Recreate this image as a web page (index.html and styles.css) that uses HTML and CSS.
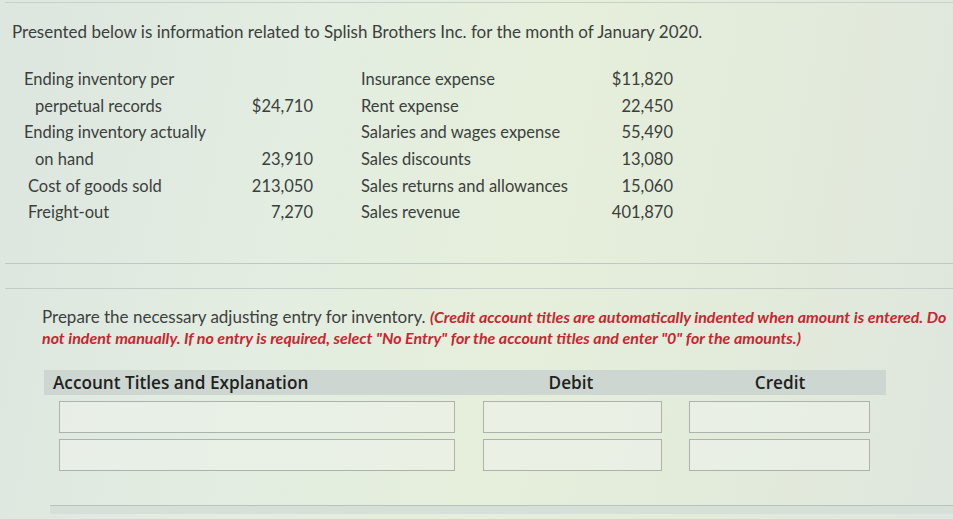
FILE: index.html
```html
<!DOCTYPE html>
<html>
<head>
<meta charset="utf-8">
<link rel="stylesheet" href="styles.css">
</head>
<body>
<div class="page">
  <section class="panel top">
    <p class="intro">Presented below is information related to Splish Brothers Inc. for the month of January 2020.</p>
    <div class="data">
      <div class="col col1">
        <div class="row"><span class="lbl">Ending inventory per</span><span class="val"></span></div>
        <div class="row"><span class="lbl ind">perpetual records</span><span class="val">$24,710</span></div>
        <div class="row"><span class="lbl">Ending inventory actually</span><span class="val"></span></div>
        <div class="row"><span class="lbl ind">on hand</span><span class="val">23,910</span></div>
        <div class="row"><span class="lbl sm">Cost of goods sold</span><span class="val">213,050</span></div>
        <div class="row"><span class="lbl sm">Freight-out</span><span class="val">7,270</span></div>
      </div>
      <div class="col col2">
        <div class="row"><span class="lbl">Insurance expense</span><span class="val">$11,820</span></div>
        <div class="row"><span class="lbl">Rent expense</span><span class="val">22,450</span></div>
        <div class="row"><span class="lbl">Salaries and wages expense</span><span class="val">55,490</span></div>
        <div class="row"><span class="lbl">Sales discounts</span><span class="val">13,080</span></div>
        <div class="row"><span class="lbl">Sales returns and allowances</span><span class="val">15,060</span></div>
        <div class="row"><span class="lbl">Sales revenue</span><span class="val">401,870</span></div>
      </div>
    </div>
  </section>
  <section class="panel bottom">
    <p class="instr"><span class="plain">Prepare the necessary adjusting entry for inventory.</span> <em class="warn">(Credit account titles are automatically indented when amount is entered. Do not indent manually. If no entry is required, select "No Entry" for the account titles and enter "0" for the amounts.)</em></p>
    <div class="journal">
      <div class="jhead">
        <span class="h-acct">Account Titles and Explanation</span>
        <span class="h-debit">Debit</span>
        <span class="h-credit">Credit</span>
      </div>
      <div class="jrow">
        <div class="box acct"></div>
        <div class="box debit"></div>
        <div class="box credit"></div>
      </div>
      <div class="jrow">
        <div class="box acct"></div>
        <div class="box debit"></div>
        <div class="box credit"></div>
      </div>
    </div>
    <div class="footline"></div>
  </section>
</div>
</body>
</html>
```

FILE: styles.css
```css
html, body {
  margin: 0;
  padding: 0;
}
body {
  width: 953px;
  height: 519px;
  overflow: hidden;
  background: linear-gradient(100deg, #dde6df 0%, #e3ede1 30%, #e6efdb 55%, #e2eadb 80%, #dfe6de 100%);
  font-family: Lato, "Open Sans", sans-serif;
  color: #3a3f3c;
}
.page {
  display: flex;
  flex-direction: column;
}
.panel.top {
  border-top: 1px solid #c8d0ca;
  border-bottom: 1px solid #bfc8c2;
  margin: 2px 0 0 5px;
  height: 262px;
  box-sizing: border-box;
}
.intro {
  margin: 19px 0 0 7px;
  font-size: 17px;
  line-height: 20px;
  color: #3b3f3d;
}
.data {
  display: flex;
  margin-top: 24px;
}
.col {
  display: flex;
  flex-direction: column;
}
.col1 {
  margin-left: 19px;
  width: 289px;
}
.col2 {
  margin-left: 48px;
  width: 312px;
}
.row {
  display: flex;
  justify-content: space-between;
  height: 26.6px;
  align-items: center;
  font-size: 16.5px;
}
.lbl.ind {
  padding-left: 11px;
}
.lbl.sm {
  padding-left: 4px;
}
.val {
  text-align: right;
}
.panel.bottom {
  border-top: 1px solid #c3ccc6;
  margin: 24px 0 0 5px;
  height: 230px;
  box-sizing: border-box;
  display: flex;
  flex-direction: column;
}
.instr {
  margin: 17px 0 0 37px;
  font-size: 17px;
  line-height: 21px;
  color: #3d413e;
  width: 912px;
}
.warn {
  color: #c8262f;
  font-weight: bold;
  font-style: italic;
  font-size: 16px;
}
.journal {
  margin: 22px 0 0 39px;
  width: 842px;
}
.jhead {
  display: flex;
  align-items: center;
  height: 25px;
  background: #cdd6d0;
  font-family: "Open Sans", sans-serif;
  font-weight: 600;
  font-size: 17.2px;
  color: #1e2220;
}
.h-acct {
  margin-left: 9px;
  width: 468px;
}
.h-debit {
  width: 100px;
  text-align: center;
}
.h-credit {
  margin-left: 109px;
  width: 100px;
  text-align: center;
}
.jrow {
  display: flex;
  margin-top: 6px;
  margin-left: 15px;
}
.box {
  height: 32px;
  border: 1px solid #aab3ae;
  background: rgba(236, 242, 234, 0.6);
  box-sizing: border-box;
}
.box.acct {
  width: 396px;
}
.box.debit {
  width: 179px;
  margin-left: 28px;
}
.box.credit {
  width: 181px;
  margin-left: 27px;
}
.footline {
  margin: 34px 0 0 45px;
  border-top: 1px solid #b9c2bc;
  height: 8px;
  background: #d7e0d8;
}
```
